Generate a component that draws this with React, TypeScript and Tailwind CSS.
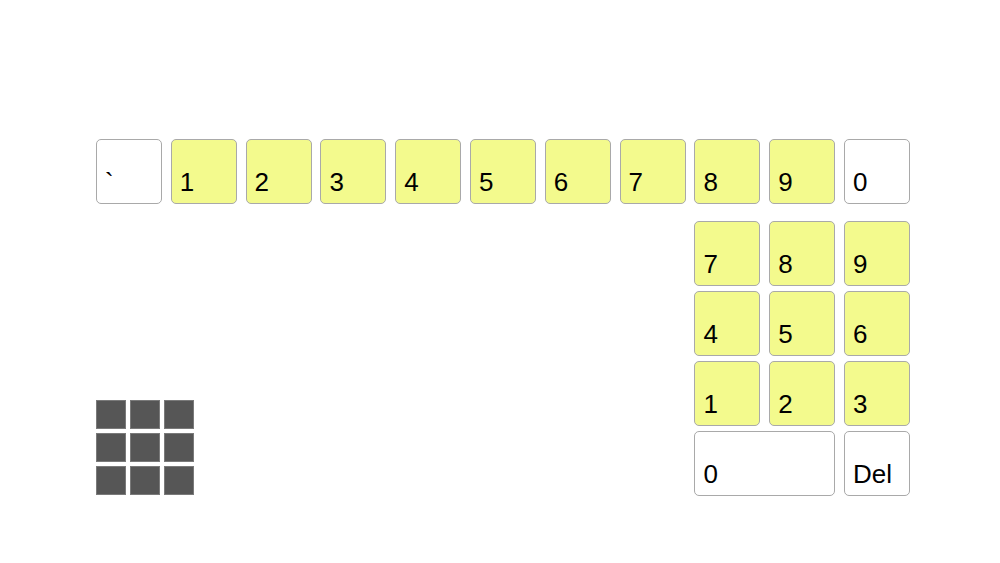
import React from "react";

const Y = "bg-[#f3fa8d]";
const W = "bg-white";

function Key({ label, yellow, className = "" }: { label: string; yellow?: boolean; className?: string }) {
  return (
    <div
      className={`h-[65px] rounded-[5px] border border-[#a9a9a9] flex items-end pl-[8px] pb-[8px] text-[26px] leading-none text-black ${yellow ? Y : W} ${className}`}
    >
      {label}
    </div>
  );
}

export default function App() {
  const top = ["`", "1", "2", "3", "4", "5", "6", "7", "8", "9", "0"];
  return (
    <div
      className="w-[1000px] h-[563px] bg-white pt-[139px] pl-[96px]"
      style={{ fontFamily: '"Liberation Sans", Arial, sans-serif' }}
    >
      <div className="w-[814px] grid grid-cols-11 gap-x-[8.8px]">
        {top.map((t, i) => (
          <Key key={i} label={t} yellow={i > 0 && i < 10} />
        ))}
      </div>
      <div className="w-[814px] mt-[17px] grid grid-cols-11 gap-x-[8.8px] gap-y-[5px] grid-rows-[65px_65px_65px_65px]">
        <Key label="7" yellow className="col-start-9 row-start-1" />
        <Key label="8" yellow className="col-start-10 row-start-1" />
        <Key label="9" yellow className="col-start-11 row-start-1" />
        <Key label="4" yellow className="col-start-9 row-start-2" />
        <Key label="5" yellow className="col-start-10 row-start-2" />
        <Key label="6" yellow className="col-start-11 row-start-2" />
        <Key label="1" yellow className="col-start-9 row-start-3" />
        <Key label="2" yellow className="col-start-10 row-start-3" />
        <Key label="3" yellow className="col-start-11 row-start-3" />
        <Key label="0" className="col-start-9 col-span-2 row-start-4" />
        <Key label="Del" className="col-start-11 row-start-4" />
        <div className="col-start-1 col-span-2 row-start-3 row-span-2 self-end mb-[1px] w-[98px] grid grid-cols-3 gap-[4px]">
          {Array.from({ length: 9 }).map((_, i) => (
            <div key={i} className="h-[29px] bg-[#565656] border border-[#7a7a7a]" />
          ))}
        </div>
      </div>
    </div>
  );
}
